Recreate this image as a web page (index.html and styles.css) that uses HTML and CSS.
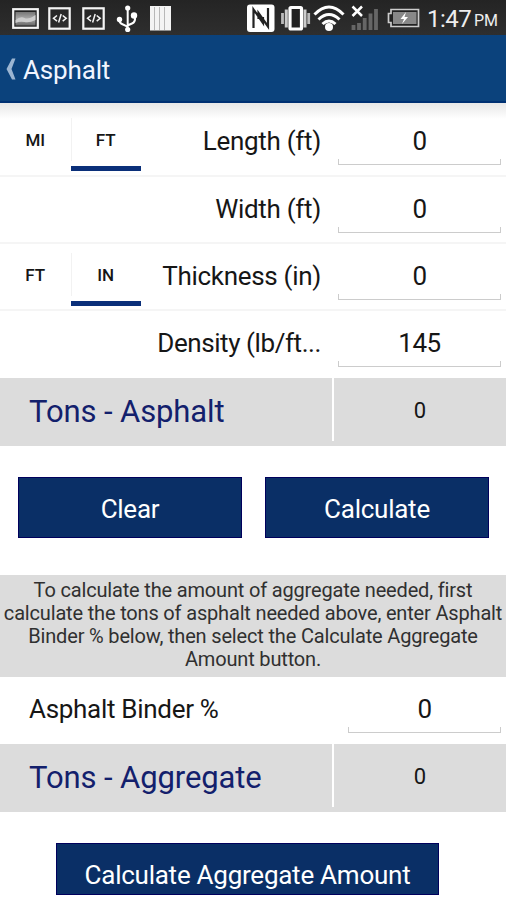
FILE: index.html
```
<!DOCTYPE html>
<html lang="en">
<head>
<meta charset="utf-8">
<title>Asphalt</title>
<link rel="stylesheet" href="styles.css">
</head>
<body>
<div class="status">
  <svg class="status-left" width="180" height="35" viewBox="0 0 180 35">
    <defs><linearGradient id="photo" x2="0" y2="1"><stop stop-color="#777"/><stop offset=".5" stop-color="#aaa"/><stop offset="1" stop-color="#666"/></linearGradient></defs>
    <rect x="13.200" y="9.200" width="24.600" height="18.600" fill="#222" stroke="#f4f4f4" stroke-width="2.200"/>
    <rect x="15.500" y="12" width="20" height="13.500" fill="url(#photo)"/>
    <path d="M15.500 20q5-4 9-2t11-3v5q-6 3-11 2t-9 1z" fill="#ccc"/>
    <g id="code" fill="none" stroke="#f4f4f4">
      <rect x="49.300" y="8.300" width="20.400" height="20.400" stroke-width="2.200"/>
      <path d="M57 15.500l-3.500 2.800 3.500 2.800M62.700 15.500l3.500 2.800-3.500 2.800M61.200 14l-2.600 8.500" stroke-width="1.500"/>
    </g>
    <use href="#code" x="34"/>
    <path d="M127.700 8v22M119 19q0 4 4 5.500t4.700 3M135 17q.5 5-3 6.500t-4.300 2" fill="none" stroke="#fff" stroke-width="2"/>
    <g fill="#fff"><circle cx="127.700" cy="8" r="2.600"/><circle cx="119.500" cy="19.500" r="2.700"/><circle cx="134" cy="15.500" r="3.200"/><circle cx="127.700" cy="29.500" r="2.600"/></g>
    <rect x="150" y="6" width="21" height="24.500" fill="#f4f4f4"/>
    <path d="M154.500 7v23M159.500 7v23M164.500 7v23" stroke="#b8b8b8" stroke-width="1"/>
  </svg>
  <svg class="status-right" width="184" height="35" viewBox="244 0 184 35">
    <rect x="247" y="4.500" width="27.500" height="27.500" rx="3" fill="#fff"/>
    <path d="M253.500 28V9.500l9.500 13.500v-6M268 8v18.500L258.500 13v6" fill="none" stroke="#222" stroke-width="2.200"/>
    <rect x="290" y="7.500" width="11.500" height="21.500" rx="1" fill="#222" stroke="#fff" stroke-width="3.200"/>
    <path d="M286.300 9.500v18M305 9.500v18" stroke="#ccc" stroke-width="3"/>
    <path d="M282.500 13v11M308.700 13v11" stroke="#bbb" stroke-width="2.800"/>
    <g fill="none" stroke="#fff" stroke-width="3"><path d="M314.500 14.500q14.500-15 29 0M318.500 19.500q10.500-10 21 0M322.500 24q6.500-6 13 0"/></g>
    <circle cx="329" cy="27" r="4" fill="#fff"/>
    <path d="M352.500 6.500l9.500 9.500M362 6.500l-9.500 9.500" stroke="#fff" stroke-width="2.500"/>
    <path d="M353.500 30v-5M359 30v-7M364.700 30V18M370.500 30V13.500M376 30V9" stroke="#666" stroke-width="3.800"/>
    <path d="M391 9.500h27.500v17H391v-4h-2.500v-9h2.500z" fill="#222" stroke="#ccc" stroke-width="1.700"/>
    <rect x="393" y="12" width="23.500" height="12" fill="#888"/>
    <path d="M406 12l-5.500 7h3.500l-2 5 6-7h-3.500z" fill="#fff"/>
  </svg>
  <span class="clock">1:47</span><span class="meridiem">PM</span>
</div>
<header class="bar">
  <svg width="12" height="24" viewBox="0 0 12 24"><path d="M9.500 2.500H6L.5 13 6 23.500h3.500L5.500 13z" fill="#9bb5d2"/></svg>
  <h1>Asphalt</h1>
</header>
<main>
  <section class="row first">
    <div class="tabs"><span class="tab">MI</span><span class="tab active">FT</span></div>
    <label>Length (ft)</label><span class="field">0</span>
  </section>
  <section class="row">
    <label>Width (ft)</label><span class="field">0</span>
  </section>
  <section class="row">
    <div class="tabs"><span class="tab">FT</span><span class="tab active">IN</span></div>
    <label>Thickness (in)</label><span class="field">0</span>
  </section>
  <section class="row density">
    <label>Density (lb/ft...</label><span class="field">145</span>
  </section>
  <section class="result"><h2>Tons - Asphalt</h2><output>0</output></section>
  <div class="buttons"><button>Clear</button><button>Calculate</button></div>
  <p class="note">To calculate the amount of aggregate needed, first<br>calculate the tons of asphalt needed above, enter Asphalt<br>Binder % below, then select the Calculate Aggregate<br>Amount button.</p>
  <section class="row binder"><label>Asphalt Binder %</label><span class="field">0</span></section>
  <section class="result aggregate"><h2>Tons - Aggregate</h2><output>0</output></section>
  <button class="wide">Calculate Aggregate Amount</button>
</main>
</body>
</html>
```
FILE: styles.css
```
* { box-sizing: border-box; }
body { margin: 0; width: 506px; height: 900px; overflow: hidden; background: #fff; color: #161616; font-family: Roboto, "Liberation Sans", sans-serif; }
h1, h2, p { margin: 0; font-weight: 400; }
svg { display: block; flex: none; }
.status { height: 35px; display: flex; align-items: flex-start; background: linear-gradient(#242424, #2e2e2e); color: #eee; white-space: nowrap; }
.status-right { margin-left: 64px; margin-right: -1px; }
.clock { font-size: 24px; line-height: 38px; width: 43px; letter-spacing: -0.5px; }
.meridiem { font-size: 16px; line-height: 42px; margin-left: 4px; }
.bar { height: 68px; padding: 0 0 0 6px; display: flex; align-items: center; gap: 5px; background: #0b427c; border-bottom: 2px solid #003173; color: #f1f5ff; }
.bar h1 { font-size: 26px; line-height: 30px; padding-top: 3px; letter-spacing: -0.15px; }
.row { height: 67px; display: flex; justify-content: flex-end; border-bottom: 2px solid #f5f5f5; }
.row.first { height: 74px; padding-top: 6px; background: linear-gradient(#e8e8e8, #fff 16px); }
.row.density, .row.binder { border: 0; }
.row label { font-size: 26px; line-height: 64px; margin-right: 17px; white-space: nowrap; letter-spacing: -0.3px; }
.row.density label { letter-spacing: -0.42px; }
.tabs { display: flex; margin-right: auto; padding-top: 9px; }
.tab { width: 70.500px; height: 45px; text-align: center; font-size: 17px; font-weight: 500; line-height: 44px; }
.tab.active { height: 53px; background: linear-gradient(#0a2f79, #0a2f79) bottom / 100% 5px no-repeat, linear-gradient(#f2f2f2, #f2f2f2) left top / 1px 43px no-repeat; }
.field { width: 163px; height: 56px; margin-right: 5px; text-align: center; font-size: 26px; line-height: 64px; letter-spacing: -0.4px; background: linear-gradient(#ccc, #ccc) bottom / 100% 1.500px no-repeat, linear-gradient(#ccc, #ccc) left bottom / 1px 6px no-repeat, linear-gradient(#ccc, #ccc) right bottom / 1px 6px no-repeat; }
.result { height: 68px; display: flex; background: #dcdcdc; }
.result h2 { width: 334px; height: 63px; padding-left: 29px; border-right: 2px solid #fff; font-size: 31px; line-height: 67px; letter-spacing: -0.1px; color: #13206c; }
.result output { flex: 1; text-align: center; font-size: 22px; line-height: 65px; }
.buttons { display: flex; gap: 23px; padding: 31px 16px 37px 18px; }
button { width: 224px; height: 61px; border: 1px solid #00005c; padding: 3px 0 0; background: #0a2f66; color: #fff; font: 26px/30px Roboto, "Liberation Sans", sans-serif; letter-spacing: -0.25px; white-space: nowrap; }
.note { height: 102px; padding-top: 4px; background: #dcdcdc; color: #303030; text-align: center; font-size: 20px; line-height: 23px; letter-spacing: -0.17px; white-space: nowrap; }
.binder label { margin: 0 auto 0 29px; }
.binder .field { width: 153px; }
.wide { display: block; width: 383px; height: 52px; margin: 31px 0 0 56px; padding-top: 12px; }
```
